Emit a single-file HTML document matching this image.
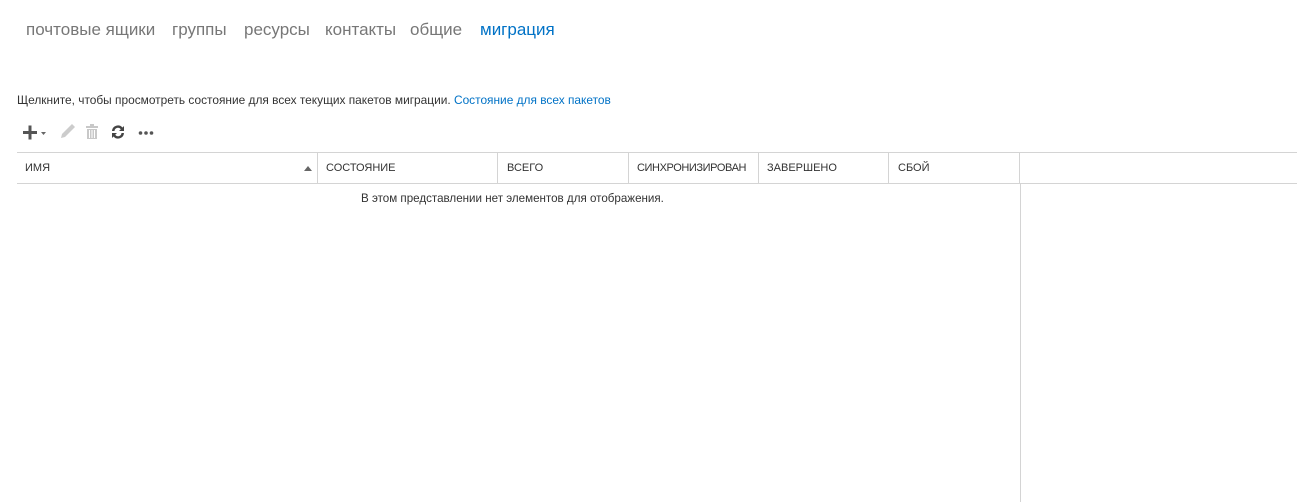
<!DOCTYPE html>
<html><head><meta charset="utf-8"><style>
body{margin:0;width:1297px;height:502px;background:#fff;position:relative;overflow:hidden;font-family:"Liberation Sans",sans-serif;}
.a{position:absolute;white-space:nowrap}
.nav{top:20px;font-size:17px;color:#777;}
.h{top:162px;font-size:11px;color:#333}
.vl{position:absolute;width:1px;background:#d4d4d4}
</style></head><body>
<div class="a nav" style="left:26px">почтовые ящики</div>
<div class="a nav" style="left:172px">группы</div>
<div class="a nav" style="left:244px">ресурсы</div>
<div class="a nav" style="left:325px">контакты</div>
<div class="a nav" style="left:410px">общие</div>
<div class="a nav" style="left:480px;color:#0072c6">миграция</div>
<div class="a" style="left:17px;top:93px;font-size:11.9px;color:#333">Щелкните, чтобы просмотреть состояние для всех текущих пакетов миграции. <span style="color:#0072c6">Состояние для всех пакетов</span></div>
<svg class="a" style="left:17px;top:120px" width="145" height="24">
<rect x="6" y="11" width="14" height="3" fill="#555"/><rect x="11.5" y="5.5" width="3" height="14" fill="#555"/>
<path d="M24 12h5l-2.5 3z" fill="#666"/>
<path d="M44 18l1-4 10-10 3 3-10 10z" fill="#ccc"/>
<g fill="#c8c8c8"><rect x="69" y="6" width="12" height="2"/><rect x="73" y="4" width="4" height="2"/><path d="M70 9h10v10h-10z"/></g>
<g fill="#fff"><rect x="72" y="10" width="1" height="8"/><rect x="74.5" y="10" width="1" height="8"/><rect x="77" y="10" width="1" height="8"/></g>
<path d="M95 11a6 6 0 0 1 10.5-3.5l1.5-1.5v5h-5l1.8-1.8A3.5 3.5 0 0 0 97.5 11zM107 13a6 6 0 0 1-10.5 3.5l-1.5 1.5v-5h5l-1.8 1.8A3.5 3.5 0 0 0 104.5 13z" fill="#444"/>
<circle cx="123.5" cy="13" r="1.8" fill="#555"/><circle cx="129" cy="13" r="1.8" fill="#555"/><circle cx="134.5" cy="13" r="1.8" fill="#555"/>
</svg>
<div style="position:absolute;left:17px;top:152px;width:1280px;height:1px;background:#d4d4d4"></div>
<div style="position:absolute;left:17px;top:183px;width:1280px;height:1px;background:#d4d4d4"></div>
<div class="vl" style="left:317px;top:153px;height:30px"></div>
<div class="vl" style="left:497px;top:153px;height:30px"></div>
<div class="vl" style="left:628px;top:153px;height:30px"></div>
<div class="vl" style="left:758px;top:153px;height:30px"></div>
<div class="vl" style="left:888px;top:153px;height:30px"></div>
<div class="vl" style="left:1019px;top:153px;height:30px"></div>
<div class="vl" style="left:1020px;top:184px;height:318px"></div>
<div class="a h" style="left:25px">ИМЯ</div>
<svg class="a" style="left:304px;top:165px" width="8" height="7"><path d="M0 6l4-5 4 5z" fill="#666"/></svg>
<div class="a h" style="left:326px">СОСТОЯНИЕ</div>
<div class="a h" style="left:507px">ВСЕГО</div>
<div class="a h" style="left:637px;letter-spacing:-0.4px">СИНХРОНИЗИРОВАН</div>
<div class="a h" style="left:767px">ЗАВЕРШЕНО</div>
<div class="a h" style="left:898px">СБОЙ</div>
<div class="a" style="left:361px;top:192px;font-size:11.6px;color:#333">В этом представлении нет элементов для отображения.</div>
</body></html>
